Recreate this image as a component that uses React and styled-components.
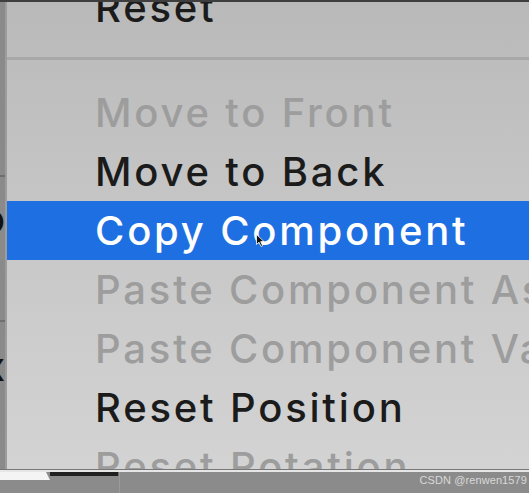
import React from "react";
import styled, { createGlobalStyle } from "styled-components";

const GlobalStyle = createGlobalStyle`
  html, body {
    margin: 0;
    padding: 0;
    background: #8b8b8b;
    overflow: hidden;
  }
`;

const Screen = styled.div`
  width: 529px;
  height: 493px;
  display: flex;
  flex-direction: column;
  overflow: hidden;
  font-family: Inter, "Noto Sans", sans-serif;
`;

const TopEdge = styled.div`
  height: 2px;
  flex: none;
  background: #3e3e3e;
`;

const Main = styled.div`
  flex: 1;
  display: flex;
  min-height: 0;
`;

const Side = styled.div`
  width: 5px;
  flex: none;
  display: flex;
  flex-direction: column;
  background: #8a8a8a;
  border-right: 2px solid #9c9c9c;
  overflow: hidden;
`;

const SideCell = styled.div`
  height: ${(p) => p.h}px;
  flex: none;
  display: flex;
  justify-content: flex-end;
  align-items: flex-start;
  border-top: ${(p) => (p.line ? "2px solid #6f6f6f" : "none")};
`;

const SideGlyph = styled.span`
  margin-top: ${(p) => p.top}px;
  font-size: 39px;
  font-weight: 500;
  line-height: 1;
  color: #111;
  white-space: nowrap;
`;

const Menu = styled.div`
  flex: 1;
  min-width: 0;
  overflow: hidden;
  background: linear-gradient(180deg, #b9b9b9 0%, #c2c2c2 30%, #cccccc 70%, #d3d3d3 100%);
`;

const List = styled.div`
  display: flex;
  flex-direction: column;
  margin-top: -24px;
`;

const Item = styled.div`
  position: relative;
  height: 59px;
  flex: none;
  padding-left: 88px;
  font-size: 40px;
  font-weight: 500;
  line-height: 59px;
  letter-spacing: 2.8px;
  white-space: nowrap;
  color: ${(p) => (p.active ? "#ffffff" : p.disabled ? "#9d9d9d" : "#1b1b1b")};
  background: ${(p) => (p.active ? "#1e6fe1" : "transparent")};
`;

const Separator = styled.div`
  height: 46px;
  flex: none;
  display: flex;
  flex-direction: column;
  justify-content: flex-start;
  padding-top: 20px;
  box-sizing: border-box;

  &::after {
    content: "";
    display: block;
    height: 3px;
    background: #a8a8a8;
  }
`;

const Pointer = styled.svg`
  position: absolute;
  left: 249px;
  top: 33px;
  width: 9px;
  height: 13px;
`;

const Bottom = styled.div`
  height: 23px;
  flex: none;
  display: flex;
  flex-direction: column;
  background: #8b8b8b;
  border-top: 1px solid #777;
`;

const BottomLine = styled.div`
  height: 2px;
  flex: none;
  background: #e6e6e6;
`;

const BottomRow = styled.div`
  flex: 1;
  display: flex;
  align-items: flex-start;
`;

const Thumb = styled.div`
  width: 50px;
  height: 8px;
  flex: none;
  background: #f4f4f4;
  clip-path: polygon(0 0, 92% 0, 100% 100%, 0 100%);
`;

const Track = styled.div`
  width: 68px;
  height: 4px;
  flex: none;
  background: #202020;
  border-right: 1px solid #6d6d6d;
`;

const Rest = styled.div`
  flex: 1;
  display: flex;
  justify-content: flex-end;
  padding-right: 2px;
  border-left: 1px solid #9a9a9a;
  align-self: stretch;
`;

const Watermark = styled.span`
  font-family: "Liberation Sans", Arial, sans-serif;
  font-size: 11px;
  line-height: 16px;
  color: #d9d9d9;
  letter-spacing: 0.1px;
`;

const items = [
  { label: "Reset" },
  "sep",
  { label: "Move to Front", disabled: true },
  { label: "Move to Back" },
  { label: "Copy Component", active: true },
  { label: "Paste Component As New", disabled: true },
  { label: "Paste Component Values", disabled: true },
  { label: "Reset Position" },
  { label: "Reset Rotation", disabled: true },
];

export default function App() {
  return (
    <Screen>
      <GlobalStyle />
      <TopEdge />
      <Main>
        <Side>
          <SideCell h={173} />
          <SideCell h={143} line>
            <SideGlyph top={22}>o</SideGlyph>
          </SideCell>
          <SideCell h={152} line>
            <SideGlyph top={25}>x</SideGlyph>
          </SideCell>
        </Side>
        <Menu>
          <List>
            {items.map((it, i) =>
              it === "sep" ? (
                <Separator key={i} />
              ) : (
                <Item key={i} active={it.active} disabled={it.disabled}>
                  {it.label}
                  {it.active && (
                    <Pointer viewBox="0 0 9 13">
                      <path
                        d="M0.5 0.5 L0.5 10.5 L3 8.2 L5 12.5 L6.6 11.8 L4.7 7.6 L8 7.6 Z"
                        fill="#111"
                        stroke="#fff"
                        strokeWidth="0.8"
                      />
                    </Pointer>
                  )}
                </Item>
              )
            )}
          </List>
        </Menu>
      </Main>
      <Bottom>
        <BottomLine />
        <BottomRow>
          <Thumb />
          <Track />
          <Rest>
            <Watermark>CSDN @renwen1579</Watermark>
          </Rest>
        </BottomRow>
      </Bottom>
    </Screen>
  );
}
